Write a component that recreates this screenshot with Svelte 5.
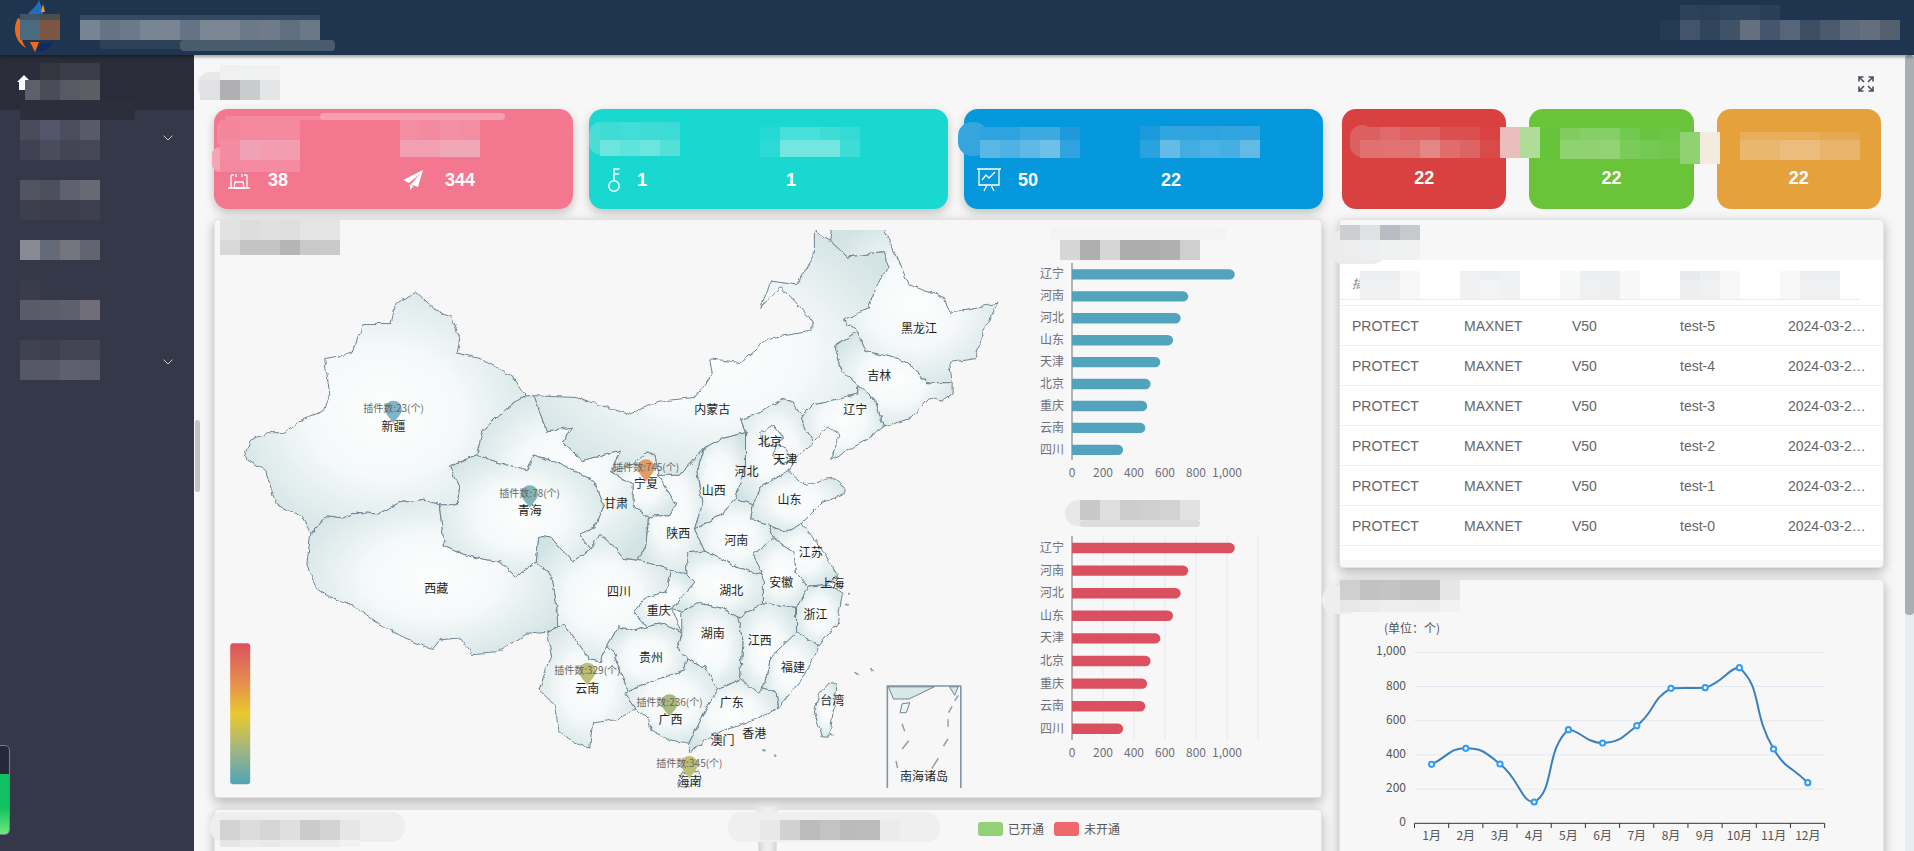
<script>
	// 20px mosaic cells, like the pixelated censoring in the screenshot
	const marks = [];
	function row(x, y, h, colours, w = 20) {
		colours.forEach((c, i) => marks.push({ x: x + i * w, y, w, h, c, r: 0 }));
	}
	function blob(x, y, w, h, c, r = 10) {
		marks.push({ x, y, w, h, c, r });
	}

	// header
	blob(100, 40, 85, 9, '#2c4259', 2);
	blob(180, 40, 155, 11, '#4a5b6e', 4);
	row(20, 14, 6, ['#3f566a', '#4a4e4c']);
	row(20, 20, 20, ['#4b6a7f', '#7b5743']);
	row(80, 15, 5, Array(12).fill('#354b63'));
	row(80, 20, 20, ['#778492', '#667384', '#6c7989', '#788593', '#798593', '#647486', '#7a8693', '#7a8693', '#6c7988', '#6f7b8a', '#5f6f80', '#6a7787']);
	row(1680, 5, 15, ['#2d425a', '#2b3f57', '#2e445c', '#2f445c', '#2a3e55']);
	row(1660, 20, 20, ['#243a52', '#42546a', '#30445a', '#3f5267', '#646f7f', '#44566c', '#56657a', '#3c4e63', '#4a596b', '#5c6a7c', '#646f7e', '#55606f']);
	// sidebar
	blob(20, 100, 115, 20, '#2c2e3c', 3);
	row(40, 63, 17, ['#34353f', '#3c3d49', '#3c3d49']);
	marks.push({ x: 25, y: 80, w: 15, h: 20, c: '#5e5f68', r: 0 });
	row(40, 80, 20, ['#4b4c58', '#585962', '#5d5d66']);
	row(20, 120, 20, ['#4a4c5c', '#53566a', '#4b4d5d', '#585a6a']);
	row(20, 140, 20, ['#3f4152', '#4a4c5c', '#434555', '#454757']);
	row(20, 180, 20, ['#52545f', '#4c505c', '#5f6070', '#686972']);
	row(20, 200, 20, ['#3d3f4f', '#3b3d4c', '#3b3d4c', '#3e4050']);
	row(20, 240, 20, ['#888994', '#646a78', '#74757f', '#62646f']);
	row(20, 280, 20, ['#3a3c4c']);
	row(20, 300, 20, ['#595b69', '#5b5d6b', '#5e606e', '#6f6e78']);
	row(20, 340, 20, ['#3f4150', '#3d3f4f', '#434555', '#434555']);
	row(20, 360, 20, ['#565866', '#565866', '#5e606d', '#5d5e6c']);
	// page title
	blob(198, 72, 30, 28, '#e8e8e9', 12);
	row(220, 65, 15, ['#f0f0f0', '#f0f1f1', '#f1f1f1']);
	row(200, 80, 20, ['#e0e1e2', '#b0b0b3', '#c9cccd', '#e4e5e6']);
	// pink card
	blob(225, 116, 100, 4, '#f58a9f', 2);
	blob(320, 113, 185, 7, '#f4a0b2', 4);
	blob(217, 122, 10, 24, '#f48a9f', 5);
	blob(212, 147, 16, 25, '#f5a5b5', 8);
	row(220, 120, 20, ['#f4869b', '#f5899e', '#f48a9e', '#f48a9e']);
	row(220, 140, 20, ['#f48ba0', '#f0a1b3', '#f29eb0', '#f29eb0']);
	row(220, 160, 12, ['#f4889e', '#f58ba0', '#f58ba0', '#f58ba0']);
	row(400, 120, 20, ['#f48da1', '#f48a9f', '#f390a5', '#f48da1']);
	row(400, 140, 17, ['#f1a0b3', '#f1a0b3', '#f0a7b8', '#f0a7b8']);
	// teal card
	blob(589, 122, 24, 33, '#48ddd7', 12);
	row(600, 122, 18, ['#3fdcd6', '#41ded8', '#3fdcd6', '#3cdbd5']);
	row(600, 140, 16, ['#6ce5de', '#5fe3dc', '#6ce5de', '#53e0d9']);
	row(760, 127, 13, ['#25d9d3', '#47dfd9', '#47dfd9', '#3edcd7', '#34dbd4']);
	row(760, 140, 17, ['#2cdad4', '#74e6e0', '#74e6e0', '#74e6e0', '#3fdcd6']);
	// blue card
	blob(958, 122, 30, 34, '#35a5df', 14);
	row(980, 127, 13, ['#2ea3df', '#2ea3df', '#3caae1', '#3caae1', '#2099dc']);
	row(980, 140, 18, ['#5ab7e6', '#50b2e4', '#5fb9e7', '#6fc0e8', '#2ea3df']);
	row(1140, 126, 14, ['#1d98db', '#30a5df', '#30a5df', '#2ea3df', '#30a5df', '#30a5df']);
	row(1140, 140, 18, ['#2ba1de', '#63bbe6', '#43ade2', '#4cb1e4', '#45aee2', '#62bae6']);
	// red, green and orange cards: one strip across all three
	blob(1350, 125, 24, 32, '#dd6060', 14);
	row(1360, 127, 13, ['#dd6060', '#e06a6a', '#de6060', '#de6060', '#da4f4f', '#db4f4f', '#d84242']);
	row(1360, 140, 18, ['#e17070', '#e27272', '#e17272', '#e58686', '#e06c6c', '#de6464', '#d94a4a']);
	row(1500, 127, 31, ['#ebbdbd', '#afdc99']);
	row(1540, 128, 12, ['#66c33c', '#80cc5e', '#86cf66', '#86cf66', '#72c950', '#68c33f', '#6cc545']);
	row(1540, 140, 19, ['#66c33c', '#8dd36f', '#90d272', '#92d376', '#7acb58', '#74c952', '#70c74c']);
	row(1680, 132, 32, ['#90d272', '#f3ebdd']);
	row(1740, 132, 8, ['#e8ae59', '#e8ae59', '#e8ae59', '#e8ae5b', '#e7a950', '#e7a950']);
	row(1740, 140, 20, ['#eab76f', '#eab76f', '#ebbc7c', '#ebbc7c', '#e9b56c', '#e9b56c']);
	// map and charts titles
	row(220, 220, 20, ['#e2e2e2', '#dddddd', '#e0e0e0', '#dedede', '#e4e4e4', '#e5e5e5']);
	row(220, 240, 15, ['#d8d8d8', '#c4c4c4', '#c4c4c4', '#b5b5b5', '#c9c9c9', '#cacaca']);
	blob(1050, 227, 177, 13, '#f3f3f3', 6);
	row(1060, 240, 20, ['#d6d6d6', '#aeaeae', '#d6d6d6', '#adadad', '#adadad', '#b0b0b0', '#cfcfcf']);
	blob(1065, 500, 30, 26, '#e8e8e8', 13);
	row(1080, 500, 20, ['#c8c8c8', '#dfdfdf', '#cdcdcd', '#cfcfcf', '#d2d2d2', '#e2e2e2']);
	blob(1080, 520, 120, 7, '#dddddd', 4);
	// table title and head
	blob(1328, 230, 60, 34, '#ececec', 16);
	row(1340, 225, 15, ['#ccced2', '#dfe1e3', '#b9bcc4', '#c6c9ce']);
	row(1340, 240, 20, ['#ededee', '#eeeff0', '#f0f1f1', '#f0f1f1']);
	row(1360, 271, 9, ['#eceef0', '#eceef0', '#f7f7f8']);
	row(1360, 280, 20, ['#f0f1f3', '#f0f1f3', '#f8f8f9']);
	row(1460, 271, 9, ['#eff0f1', '#eceef0', '#eff0f1']);
	row(1460, 280, 20, ['#f0f1f3', '#f2f3f4', '#f0f1f3']);
	row(1560, 271, 9, ['#f7f8f8', '#eceef0', '#eceef0', '#f8f8f9']);
	row(1560, 280, 20, ['#f6f7f7', '#eff0f2', '#eceef0', '#f8f8f9']);
	row(1680, 271, 9, ['#e8e9eb', '#eceef0', '#f7f7f8']);
	row(1680, 280, 20, ['#edeef0', '#eff0f2', '#f8f8f9']);
	row(1780, 271, 9, ['#f8f8f9', '#eceef0', '#eceef0']);
	row(1780, 280, 20, ['#f8f8f9', '#eff0f2', '#eff0f2']);
	marks.push({ x: 1340, y: 299, w: 520, h: 1, c: '#e8ecf5', r: 0 });
	// line chart title
	blob(1322, 586, 40, 28, '#eeeeee', 14);
	row(1340, 580, 20, ['#cfcfcf', '#c2c2c2', '#c4c4c4', '#bfbfbf', '#bfbfbf', '#e6e6e6']);
	row(1340, 600, 12, ['#e7e7e7', '#ebebeb', '#eeeeee', '#ededed', '#ececec', '#f2f2f2']);
	// bottom panels titles
	blob(210, 812, 195, 30, '#eeeeee', 14);
	row(220, 820, 20, ['#d2d2d2', '#dcdcdc', '#d6d6d6', '#dfdfdf', '#cbcbcb', '#d3d3d3', '#e6e6e6']);
	row(220, 840, 7, ['#e6e6e6', '#ebebeb', '#e9e9e9', '#ededed', '#ececec', '#ededed', '#f2f2f2']);
	blob(728, 812, 212, 30, '#efefef', 14);
	row(760, 820, 20, ['#e8e8e8', '#d1d1d1', '#bcbcbc', '#c3c3c3', '#bbbbbb', '#bcbcbc', '#ebebeb']);

	const stats = [
		{ tone: 'pink', items: [{ icon: 'hall', value: 38 }, { icon: 'plane', value: 344 }] },
		{ tone: 'teal', items: [{ icon: 'key', value: 1 }, { value: 1 }] },
		{ tone: 'blue', items: [{ icon: 'board', value: 50 }, { value: 22 }] }
	];
	const small = [{ tone: 'red', value: 22 }, { tone: 'green', value: 22 }, { tone: 'orange', value: 22 }];

	// provinces traced in a 1568x1568 space, squeezed onto the 800x580 map
	const sx = 800 / 1568;
	const sy = 580 / 1568;
	const provinces = [
		'50,625 60,595 95,575 125,575 160,540 205,515 215,470 205,375 260,360 280,280 335,280 345,225 385,195 420,240 455,265 470,320 465,360 510,375 570,420 598,475 560,510 515,570 503,635 450,665 470,720 465,770 430,770 400,755 350,765 310,795 265,790 240,805 210,800 178,848 160,800 110,770 90,680 55,650',
		'178,848 210,800 240,805 265,790 310,795 350,765 400,755 430,770 435,830 440,880 490,910 550,925 580,965 620,925 650,960 660,1040 662,1100 640,1115 600,1120 540,1170 495,1175 470,1130 430,1135 415,1160 360,1130 310,1090 260,1040 230,1030 190,1000 170,930',
		'450,665 503,635 545,655 600,675 615,635 660,655 700,680 735,710 752,770 735,830 705,850 725,890 690,925 650,860 625,855 620,925 580,965 550,925 490,910 440,880 435,830 430,770 465,770 470,720',
		'503,635 515,570 560,510 598,475 615,475 640,570 690,560 670,600 710,650 785,625 765,680 810,715 810,770 840,805 835,880 820,920 790,915 770,880 745,850 725,890 705,850 735,830 752,770 735,710 700,680 660,655 615,635 600,675 545,655',
		'835,630 852,630 860,690 893,770 880,800 850,800 840,805 810,770 810,715 765,680 810,660',
		'950,615 935,680 945,770 930,835 950,895 915,900 915,960 885,945 820,920 835,880 840,805 850,800 880,800 893,770 860,690 900,690',
		'615,475 700,480 745,500 800,525 860,490 930,480 965,420 960,375 1020,385 1075,320 1160,300 1160,270 1100,180 1060,235 1080,165 1130,175 1165,90 1165,30 1195,55 1230,100 1300,85 1310,125 1290,170 1270,240 1222,270 1250,300 1205,340 1220,410 1250,445 1250,470 1200,490 1160,500 1140,530 1120,490 1100,485 1060,520 1020,540 1030,575 985,590 950,615 900,690 860,690 852,630 835,630 810,660 765,680 785,625 710,650 670,600 690,560 640,570',
		'1300,20 1330,110 1350,175 1420,210 1430,250 1525,225 1500,290 1480,375 1430,385 1435,440 1385,440 1360,400 1330,375 1265,355 1255,325 1250,300 1222,270 1270,240 1290,170 1310,125 1300,85 1230,100 1195,55 1200,20',
		'1205,340 1250,300 1255,325 1265,355 1330,375 1360,400 1385,440 1435,440 1435,470 1415,490 1390,480 1355,535 1300,560 1285,490 1250,445 1220,410',
		'1140,530 1160,500 1200,490 1250,470 1250,445 1285,490 1300,560 1260,600 1195,650 1215,585 1190,560 1165,600 1140,550',
		'1020,540 1060,520 1100,485 1120,490 1140,530 1140,550 1165,600 1130,640 1115,680 1060,720 1045,770 1010,755 1030,660 1030,575',
		'1060,575 1085,555 1105,590 1085,610 1060,600',
		'1090,605 1110,620 1120,650 1100,660 1085,640',
		'950,615 985,590 1030,575 1030,660 1010,755 980,800 930,835 945,770 935,680',
		'1060,720 1115,680 1150,720 1200,695 1225,720 1225,740 1180,765 1140,820 1110,845 1075,825 1040,810 1045,770',
		'930,835 980,800 1010,755 1045,770 1040,810 1075,825 1085,860 1045,905 1065,960 1015,940 950,895',
		'1075,825 1110,845 1140,820 1180,890 1210,960 1195,985 1155,990 1130,960 1125,900 1085,860',
		'1085,860 1125,900 1130,960 1155,990 1130,1050 1100,1045 1065,1035 1065,960 1045,905',
		'1195,975 1220,990 1200,1000 1180,995',
		'1155,990 1195,985 1220,1010 1210,1090 1175,1150 1130,1115 1130,1050',
		'1130,1115 1175,1150 1150,1220 1095,1320 1090,1280 1065,1265 1080,1180',
		'1015,1075 1065,1035 1100,1045 1130,1050 1130,1115 1080,1180 1065,1265 1055,1280 1020,1240 1025,1140',
		'915,900 950,895 1015,940 1065,960 1065,1035 1015,1075 985,1050 935,1035 905,1060 885,1050 930,980 915,960',
		'905,1060 935,1035 985,1050 1015,1075 1025,1140 1020,1240 975,1270 950,1205 945,1210 915,1185 895,1160 905,1120',
		'885,945 915,960 930,980 885,1050 905,1120 870,1090 835,1100 810,1060 835,1020 875,1005',
		'620,925 625,855 650,860 690,925 725,890 745,850 770,880 790,915 820,920 885,945 875,1005 835,1020 810,1060 835,1100 815,1110 780,1100 760,1150 745,1195 725,1190 695,1130 672,1090 662,1100 660,1040 650,960',
		'662,1100 672,1090 695,1130 725,1190 745,1195 760,1150 770,1165 800,1275 795,1280 815,1320 780,1350 730,1360 725,1425 690,1410 665,1385 655,1310 625,1270 650,1180 640,1115',
		'780,1100 815,1110 835,1100 870,1090 905,1120 895,1160 915,1185 910,1220 860,1240 800,1275 770,1165 760,1150',
		'800,1275 860,1240 910,1220 915,1185 945,1210 950,1205 975,1270 950,1330 920,1415 880,1405 845,1380 840,1350 815,1320 795,1280',
		'975,1270 1020,1240 1055,1280 1065,1265 1090,1280 1095,1320 1020,1365 960,1395 920,1440 920,1415 950,1330',
		'905,1495 940,1490 945,1510 920,1535 895,1530',
		'1195,1250 1210,1255 1195,1395 1180,1395 1165,1330 1175,1280'
	];
	const names = [
		['黑龙江', 1370, 295], ['吉林', 1292, 423], ['辽宁', 1245, 515], ['内蒙古', 965, 515], ['北京', 1078, 600],
		['天津', 1108, 650], ['河北', 1032, 680], ['山西', 968, 733], ['山东', 1116, 758], ['宁夏', 835, 715],
		['甘肃', 776, 768], ['陕西', 898, 848], ['河南', 1012, 868], ['江苏', 1158, 900], ['安徽', 1100, 980],
		['上海', 1200, 983], ['湖北', 1002, 1003], ['四川', 782, 1006], ['重庆', 860, 1056], ['浙江', 1167, 1067],
		['湖南', 966, 1120], ['江西', 1058, 1138], ['贵州', 845, 1185], ['福建', 1123, 1210], ['云南', 720, 1267],
		['广西', 883, 1352], ['广东', 1003, 1307], ['台湾', 1200, 1300], ['香港', 1047, 1390], ['澳门', 985, 1408],
		['海南', 920, 1518], ['新疆', 340, 560], ['青海', 607, 788], ['西藏', 424, 998], ['南海诸岛', 1380, 1507]
	];
	const pins = [
		{ x: 340, y: 520, n: 23, c: '#7fb6c6' },
		{ x: 607, y: 748, n: 78, c: '#83b5b4' },
		{ x: 835, y: 678, n: 745, c: '#e59c62' },
		{ x: 720, y: 1228, n: 329, c: '#bcbe74' },
		{ x: 881, y: 1313, n: 236, c: '#a9ba7e' },
		{ x: 920, y: 1480, n: 345, c: '#bcbe74' }
	];
	const islands = ['1248,1226', '1277,1217', '1067,1434', '1088,1448', '1200,1390', '1232,1010', '1228,1040'];
	const dashes = ['1447,1285 1440,1300', '1435,1315 1428,1332', '1427,1350 1427,1370', '1427,1403 1418,1422', '1408,1455 1395,1483', '1325,1462 1328,1482', '1350,1408 1337,1430', '1337,1362 1342,1382'];

	const ranking = [
		['辽宁', 1050], ['河南', 750], ['河北', 701], ['山东', 652], ['天津', 570],
		['北京', 507], ['重庆', 485], ['云南', 473], ['四川', 330]
	];
	const ticks = [0, 200, 400, 600, 800, 1000];
	const barX = (v) => 1072 + v * 0.155;
	function barPath(v, y) {
		const x = barX(v);
		return `M1072 ${y - 5.2} H${x - 5.2} A5.2 5.2 0 0 1 ${x - 5.2} ${y + 5.2} H1072 Z`;
	}

	// line chart, in page coordinates
	const months = ['1月', '2月', '3月', '4月', '5月', '6月', '7月', '8月', '9月', '10月', '11月', '12月'];
	const ys = [583, 535, 582, 696, 479, 519, 467, 355, 353, 293, 537, 638].map((p) => 570 + p / 3);
	const pts = ys.map((y, i) => ({ x: 1432.6 + 34.2 * i, y }));
	const clamp = (v, a, b) => Math.min(Math.max(v, Math.min(a, b)), Math.max(a, b));
	// smoothing the way the chart library does it: handles split by segment length, kept inside the neighbours
	function smooth(list, k = 0.5) {
		const handles = list.map((p, i) => {
			const a = list[i - 1] ?? p;
			const b = list[i + 1] ?? p;
			const d0 = Math.hypot(p.x - a.x, p.y - a.y);
			const d1 = Math.hypot(b.x - p.x, b.y - p.y);
			const sum = d0 + d1 || 1;
			const vx = b.x - a.x;
			const vy = b.y - a.y;
			return {
				inX: p.x - (vx * k * d0) / sum,
				inY: clamp(p.y - (vy * k * d0) / sum, a.y, p.y),
				outX: p.x + (vx * k * d1) / sum,
				outY: clamp(p.y + (vy * k * d1) / sum, p.y, b.y)
			};
		});
		let d = `M${list[0].x} ${list[0].y}`;
		for (let i = 1; i < list.length; i++) {
			const h0 = handles[i - 1];
			const h1 = handles[i];
			d += ` C${h0.outX} ${h0.outY} ${h1.inX} ${h1.inY} ${list[i].x} ${list[i].y}`;
		}
		return d;
	}
	const yTicks = [
		['1,000', 652.3], ['800', 686.5], ['600', 720.7], ['400', 754.9], ['200', 789.1], ['0', 823.3]
	];
	const table = [5, 4, 3, 2, 1, 0];
</script>

{#snippet bars(color, top, step, yEnd, yStart, gridOn, labelY)}
	{#if gridOn}
		{#each ticks.slice(1).concat(1200) as t}
			<line x1={barX(t)} x2={barX(t)} y1={yStart} y2={yEnd} class="grid" />
		{/each}
	{/if}
	<line x1="1072" x2="1072" y1={yStart} y2={yEnd} class="yaxis" />
	{#each ranking as [name, v], i}
		<path d={barPath(v, top + i * step)} fill={color} />
		<text x="1064" y={top + i * step + 4} text-anchor="end" class="tick">{name}</text>
	{/each}
	{#each ticks as t}
		<text x={barX(t)} y={labelY} text-anchor="middle" class="tick">{t === 1000 ? '1,000' : t}</text>
	{/each}
{/snippet}

<div class="app">
	<header class="topbar">
		<svg class="logo" viewBox="0 0 41 52" aria-hidden="true">
			<path d="M25 0 C27 6 29 9 29 14 L14 14 C18 9 23 6 25 0Z" fill="#1d6fc0" />
			<path d="M29 4 L31 12 L27 12Z" fill="#f39a1e" />
			<path d="M4 18 C-2 28 1 42 12 48 C6 40 5 28 8 20Z" fill="#ef6a1c" />
			<path d="M16 42 L25 42 L21 52Z" fill="#ef6a1c" />
			<path d="M23 52 C30 52 36 48 39 42 L26 44Z" fill="#0c2b63" />
		</svg>
	</header>

	<div class="body">
		<aside class="sidebar">
			<div class="home">
				<svg class="home-icon" viewBox="0 0 14 15" aria-hidden="true">
					<path d="M7 0 L0 7 L2 7 L2 15 L12 15 L12 7 L14 7Z" fill="#fff" />
				</svg>
			</div>
			<nav>
				{#each [true, false, false, false, true] as open}
					<div class="nav-item">
						{#if open}
							<svg class="chev" viewBox="0 0 10 6" aria-hidden="true">
								<path d="M0.5 0.5 L5 5 L9.5 0.5" fill="none" stroke="#c8c9d0" stroke-width="1" />
							</svg>
						{/if}
					</div>
				{/each}
			</nav>
			<div class="gauge"><div class="gauge-fill"></div></div>
		</aside>

		<main class="page">
			<div class="side-thumb"></div>
			<div class="page-track"><div class="page-thumb"></div></div>
			<div class="toolbar">
				<svg class="expand" viewBox="0 0 16 16" aria-hidden="true">
					<path d="M1 5.5V1H5.5M1 1L6 6M15 5.5V1H10.5M15 1L10 6M1 10.5V15H5.5M1 15L6 10M15 10.5V15H10.5M15 15L10 10" fill="none" stroke="#4a4f5f" stroke-width="1.6" />
				</svg>
			</div>

			<section class="stats">
				<div class="stats-wide">
					{#each stats as card}
						<div class="stat-card {card.tone}">
							{#each card.items as item}
								<div class="stat" class:bare={!item.icon}>
									{#if item.icon}
										<span class="ic">
											{#if item.icon === 'hall'}
												<svg viewBox="0 0 24 18" width="24" height="18" aria-hidden="true">
													<path d="M1 17H23M4 17V4M20 17V4M4 4H7M17 4H20" fill="none" stroke="#fff" stroke-width="1.3" />
													<path d="M9 3V6M15 3V6M8 11H16L17 17H7Z" fill="none" stroke="#fff" stroke-width="1.3" />
												</svg>
											{:else if item.icon === 'plane'}
												<svg class="plane" viewBox="0 0 20 20" width="20" height="20" aria-hidden="true">
													<path d="M20 0 L0 10 L6 13 L17 4 L8 14.5 L15 17Z M6.5 14.5 L7.5 20 L10.5 16Z" fill="#fff" />
												</svg>
											{:else if item.icon === 'key'}
												<svg viewBox="0 0 14 24" width="14" height="24" aria-hidden="true">
													<circle cx="7" cy="18" r="5.2" fill="none" stroke="#fff" stroke-width="1.4" />
													<path d="M7 13V1H12.5M7 6H12" fill="none" stroke="#fff" stroke-width="1.4" />
												</svg>
											{:else}
												<svg viewBox="0 0 26 24" width="26" height="24" aria-hidden="true">
													<path d="M1 1H25M3 1V17H23V1M8 23L11 17M18 23L15 17M6 12L10 7L13 10L19 4" fill="none" stroke="#fff" stroke-width="1.3" />
												</svg>
											{/if}
										</span>
									{/if}
									<strong>{item.value}</strong>
								</div>
							{/each}
						</div>
					{/each}
				</div>
				<div class="stats-small">
					{#each small as card}
						<div class="small-card {card.tone}"><strong>{card.value}</strong></div>
					{/each}
				</div>
			</section>

			<section class="columns">
				<div class="col-left">
					<div class="panel map-panel">
						<svg class="map" width="800" height="578" viewBox="0 0 800 578">
							<defs>
								<radialGradient id="land" cx="0.5" cy="0.5" r="0.6">
									<stop offset="0" stop-color="#fdfefe" />
									<stop offset="0.45" stop-color="#f5f9f9" />
									<stop offset="1" stop-color="#d2e3e4" />
								</radialGradient>
								<linearGradient id="scale" x1="0" y1="0" x2="0" y2="1">
									<stop offset="0" stop-color="#dc505f" />
									<stop offset="0.3" stop-color="#e6934a" />
									<stop offset="0.5" stop-color="#e9c92f" />
									<stop offset="0.75" stop-color="#a2b67e" />
									<stop offset="1" stop-color="#50a3bb" />
								</linearGradient>
								<filter id="rough" filterUnits="userSpaceOnUse" x="0" y="0" width="800" height="580" color-interpolation-filters="sRGB">
									<feTurbulence type="fractalNoise" baseFrequency="0.13" numOctaves="2" seed="4" />
									<feDisplacementMap in="SourceGraphic" scale="5" xChannelSelector="R" yChannelSelector="G" />
								</filter>
								<clipPath id="mapclip"><rect x="0" y="10" width="800" height="558" /></clipPath>
							</defs>
							<g clip-path="url(#mapclip)">
								<g filter="url(#rough)">
									<g transform="scale({sx} {sy})">
										{#each provinces as p}
											<polygon points={p} fill="url(#land)" class="prov" />
										{/each}
										{#each islands as at}
											<circle cx={at.split(',')[0]} cy={at.split(',')[1]} r="2" class="isle" />
										{/each}
									</g>
								</g>
								<g transform="scale({sx} {sy})">
									<path d="M1308 1540V1260H1452V1540" fill="none" class="inset" />
									<polygon points="1310,1262 1400,1262 1350,1295 1320,1295" fill="#d8e7e8" class="prov" />
									<polygon points="1430,1262 1447,1262 1440,1285" fill="#d8e7e8" class="prov" />
									<polygon points="1337,1308 1352,1305 1345,1332 1333,1332" fill="#f0f5f5" class="prov" />
									{#each dashes as d}
										<polyline points={d} fill="none" class="dash" />
									{/each}
								</g>
							</g>
							<rect x={20 * sx} y={1144 * sy} width="20" height="141" rx="3" fill="url(#scale)" />
							{#each names as [label, x, y]}
								<text x={x * sx} y={y * sy + 4} text-anchor="middle" class="place">{label}</text>
							{/each}
							{#each pins as pin}
								<path transform="translate({pin.x * sx} {pin.y * sy})" d="M0 11 C-3 6 -8.5 2 -8.5 -3 A8.5 8.5 0 1 1 8.5 -3 C8.5 2 3 6 0 11Z" fill={pin.c} />
								<text x={pin.x * sx} y={pin.y * sy} text-anchor="middle" class="pin-text">插件数:{pin.n}(个)</text>
							{/each}
						</svg>
						<svg class="rank" width="302" height="578" viewBox="1020 220 302 578">
							{@render bars('#52a3bc', 274.4, 21.93, 460, 263, false, 477)}
							{@render bars('#da5061', 548, 22.6, 740, 536, true, 757)}
						</svg>
					</div>
					<div class="bottom-row">
						<div class="panel low"></div>
						<div class="panel low legend-panel">
							<div class="legend">
								<i class="swatch on"></i><span>已开通</span>
								<i class="swatch off"></i><span>未开通</span>
							</div>
						</div>
					</div>
				</div>

				<div class="col-right">
					<div class="panel table-panel">
						<div class="panel-head"></div>
						<div class="table-wrap">
							<table>
								<colgroup>
									<col style="width:112px" /><col style="width:108px" /><col style="width:108px" /><col style="width:108px" /><col style="width:108px" />
								</colgroup>
								<thead>
									<tr><th>插件</th><th></th><th></th><th></th><th></th></tr>
								</thead>
								<tbody>
									{#each table as n}
										<tr>
											<td>PROTECT</td>
											<td>MAXNET</td>
											<td>V50</td>
											<td>test-{n}</td>
											<td>2024-03-2…</td>
										</tr>
									{/each}
								</tbody>
							</table>
						</div>
					</div>
					<div class="panel line-panel">
						<svg class="line" width="543" height="272" viewBox="1341 580 543 272">
							<text x="1385" y="633" class="axis-note">(单位：个)</text>
							{#each yTicks as [label, y], i}
								{#if i < 5}
									<line x1="1415.5" x2="1825.7" y1={y} y2={y} class="grid" />
								{/if}
								<text x="1407" y={y + 3} text-anchor="end" class="line-tick">{label}</text>
							{/each}
							<path d="M1415.5 823.3H1825.7" class="base" />
							{#each Array(13) as _, i}
								<line x1={1415.5 + i * 34.18} x2={1415.5 + i * 34.18} y1="823.3" y2="828" class="base" />
							{/each}
							{#each months as m, i}
								<text x={pts[i].x} y="840" text-anchor="middle" class="line-tick">{m}</text>
							{/each}
							<path d={smooth(pts)} fill="none" stroke="#3a80ba" stroke-width="2" />
							{#each pts as p}
								<circle cx={p.x} cy={p.y} r="2.6" fill="#fff" stroke="#2f9bf2" stroke-width="2" />
							{/each}
						</svg>
					</div>
				</div>
			</section>
		</main>
	</div>

	<div class="censor">
		{#each marks as m}
			<div style="left:{m.x}px;top:{m.y}px;width:{m.w}px;height:{m.h}px;background:{m.c};border-radius:{m.r}px"></div>
		{/each}
	</div>
</div>

<style>
	:global(body) {
		margin: 0;
		background: #f7f7f7;
	}
	.app {
		position: relative;
		width: 1914px;
		height: 851px;
		overflow: hidden;
		font-family: "Liberation Sans", "Noto Sans CJK SC", sans-serif;
	}
	.topbar {
		position: relative;
		z-index: 2;
		height: 55px;
		background: #1f354f;
		box-shadow: 0 2px 3px rgba(0, 0, 0, 0.35);
	}
	.logo {
		display: block;
		width: 41px;
		height: 52px;
		margin-left: 14px;
	}
	.body {
		display: flex;
		height: 796px;
	}
	.sidebar {
		position: relative;
		width: 194px;
		flex: none;
		background: #353849;
	}
	.home {
		height: 55px;
		background: #2a2c39;
		box-sizing: border-box;
		padding: 20px 0 0 17px;
	}
	.home-icon {
		display: block;
		width: 14px;
		height: 15px;
	}
	.nav-item {
		height: 56px;
		display: flex;
		align-items: center;
		justify-content: flex-end;
		padding-right: 21px;
	}
	.chev {
		width: 10px;
		height: 6px;
	}
	.gauge {
		position: absolute;
		left: -2px;
		top: 690px;
		width: 10px;
		height: 88px;
		background: #25273a;
		border: 1px solid #7c7d88;
		border-radius: 0 5px 5px 0;
		overflow: hidden;
	}
	.gauge-fill {
		margin-top: 28px;
		height: 60px;
		background: linear-gradient(#11c060 55%, #70ea78);
	}
	.page {
		position: relative;
		flex: 1;
		box-sizing: border-box;
		padding: 0 21px 0 20px;
		background: #f7f7f7;
	}
	.side-thumb {
		position: absolute;
		left: 1px;
		top: 365px;
		width: 5px;
		height: 72px;
		border-radius: 3px;
		background: #c4c4c4;
	}
	.page-track {
		position: absolute;
		right: 0;
		top: 0;
		bottom: 0;
		width: 9px;
		background: #e8edf2;
	}
	.page-thumb {
		height: 560px;
		border-radius: 4px;
		background: #a9aeb3;
	}
	.toolbar {
		height: 54px;
		display: flex;
		justify-content: flex-end;
		align-items: flex-start;
		padding: 21px 19px 0 0;
		box-sizing: border-box;
	}
	.expand {
		width: 16px;
		height: 16px;
	}
	.stats {
		display: flex;
		gap: 19px;
		height: 100px;
	}
	.stats-wide {
		display: flex;
		gap: 16px;
		width: 1109px;
	}
	.stats-small {
		display: flex;
		gap: 23px;
		width: 539px;
	}
	.stat-card {
		width: 359px;
		box-sizing: border-box;
		padding: 0 12px;
		border-radius: 14px;
		display: grid;
		grid-template-columns: 177px 1fr;
		align-items: end;
		padding-bottom: 17px;
		box-shadow: 0 4px 10px rgba(0, 0, 0, 0.22);
		color: #fff;
	}
	.stat {
		display: flex;
		align-items: center;
		gap: 16px;
		height: 24px;
	}
	.stat.bare {
		padding-left: 8px;
	}
	.teal .stat {
		gap: 10px;
	}
	.ic {
		width: 26px;
		height: 24px;
		display: flex;
		align-items: center;
		justify-content: center;
	}
	.ic svg {
		display: block;
	}
	.ic .plane {
		margin-right: 6px;
	}
	strong {
		font-size: 18px;
		font-weight: 700;
		line-height: 24px;
	}
	.small-card {
		flex: 1;
		border-radius: 14px;
		color: #fff;
		display: flex;
		align-items: flex-end;
		justify-content: center;
		padding-bottom: 19px;
		box-sizing: border-box;
	}
	.pink { background: #f47790; }
	.teal { background: #19d8d0; }
	.blue { background: #0698dc; }
	.red { background: #d94141; }
	.green { background: #69c43a; }
	.orange { background: #e5a13c; }
	.columns {
		display: grid;
		grid-template-columns: 1108px 545px;
		column-gap: 17px;
		margin-top: 10px;
	}
	.col-left,
	.col-right {
		display: flex;
		flex-direction: column;
		gap: 11px;
	}
	.panel {
		background: #f7f7f7;
		border: 1px solid #e2e2e2;
		border-radius: 4px;
		box-sizing: border-box;
		box-shadow: 0 4px 12px rgba(0, 0, 0, 0.28);
	}
	.map-panel {
		height: 579px;
		display: flex;
		padding-left: 5px;
	}
	.map,
	.rank,
	.line {
		display: block;
		flex: none;
	}
	.map text,
	.rank text,
	.line text {
		font-family: "Noto Sans CJK SC", "Liberation Sans", sans-serif;
	}
	.prov {
		stroke: #6f8391;
		stroke-width: 1;
		vector-effect: non-scaling-stroke;
		stroke-linejoin: round;
	}
	.isle {
		fill: #dde8e9;
		stroke: #6f8391;
		stroke-width: 1;
		vector-effect: non-scaling-stroke;
	}
	.inset {
		stroke: #8195a3;
		stroke-width: 1.6;
		vector-effect: non-scaling-stroke;
	}
	.dash {
		stroke: #8a9ba8;
		stroke-width: 1.4;
		vector-effect: non-scaling-stroke;
	}
	.place {
		font-size: 12px;
		fill: #1f1f1f;
	}
	.pin-text {
		font-size: 10px;
		fill: #666;
	}
	.grid {
		stroke: #e3e8f3;
		stroke-width: 1;
	}
	.yaxis {
		stroke: #6e7079;
		stroke-width: 1;
	}
	.tick {
		font-size: 12px;
		fill: #6e7079;
	}
	.bottom-row {
		display: grid;
		grid-template-columns: 545px 546px;
		column-gap: 17px;
	}
	.low {
		height: 120px;
	}
	.legend-panel {
		padding: 10px 0 0 201px;
	}
	.legend {
		display: flex;
		align-items: center;
		font: 12px "Noto Sans CJK SC", sans-serif;
		color: #555;
	}
	.swatch {
		width: 25px;
		height: 14px;
		border-radius: 3px;
		margin-right: 5px;
	}
	.swatch.on {
		background: #93d076;
	}
	.swatch.off {
		background: #f0686a;
		margin-left: 10px;
	}
	.table-panel {
		height: 349px;
		overflow: hidden;
	}
	.panel-head {
		height: 40px;
	}
	.table-wrap {
		background: #fff;
		height: 300px;
	}
	table {
		width: 544px;
		table-layout: fixed;
		border-collapse: separate;
		border-spacing: 0;
	}
	th {
		height: 46px;
		box-sizing: border-box;
		padding: 0 12px;
		text-align: left;
		font-size: 12px;
		font-weight: 400;
		font-style: italic;
		color: #888;
		border-bottom: 1px solid #ebeef5;
		overflow: hidden;
		white-space: nowrap;
	}
	td {
		height: 40px;
		box-sizing: border-box;
		padding: 0 12px;
		font-size: 14px;
		color: #666;
		border-bottom: 1px solid #ebeef5;
		white-space: nowrap;
	}
	.line-panel {
		height: 290px;
	}
	.axis-note,
	.line-tick {
		font-size: 12px;
		fill: #555;
	}
	.base {
		stroke: #333;
		stroke-width: 1;
		fill: none;
	}
	.censor {
		position: absolute;
		inset: 0;
		z-index: 3;
		pointer-events: none;
	}
	.censor div {
		position: absolute;
	}
</style>
